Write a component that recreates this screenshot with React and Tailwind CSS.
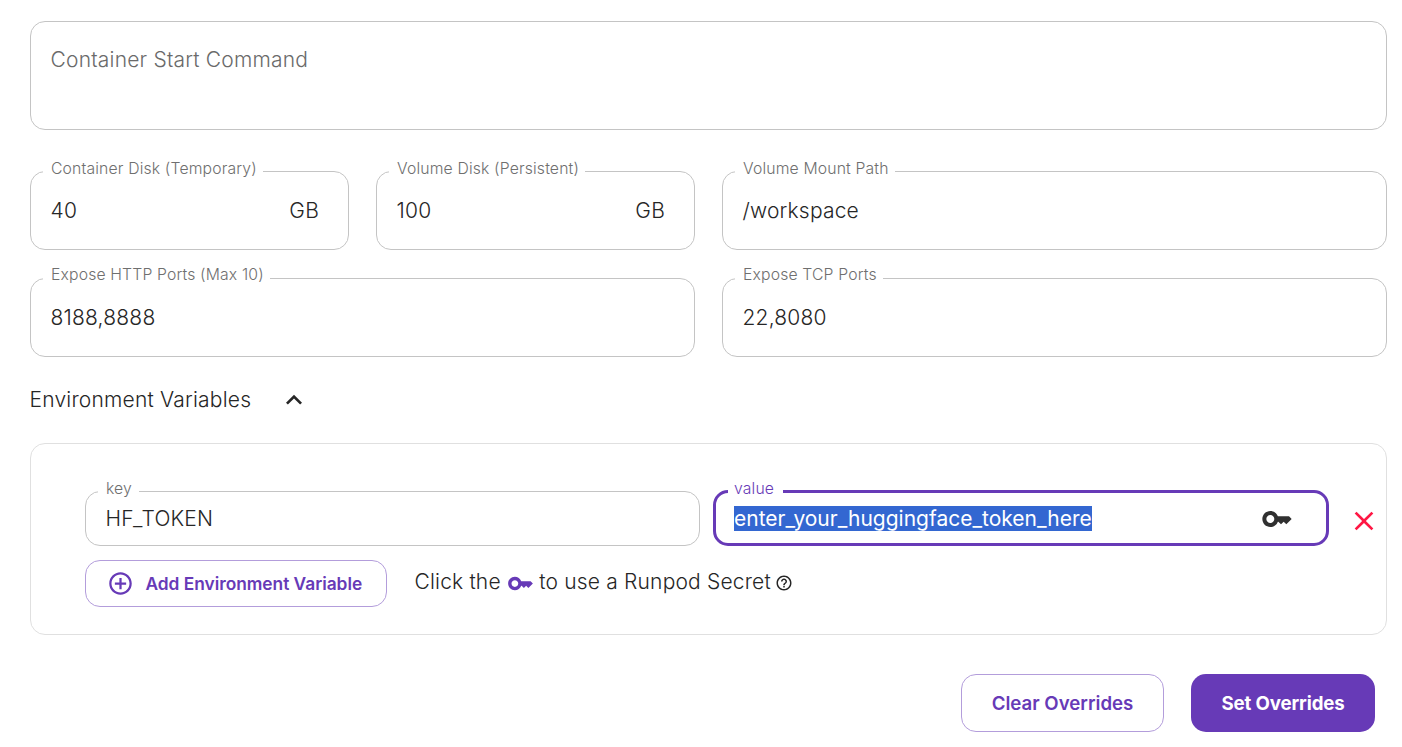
import React from "react";

const KEY =
  "M21 10h-8.35C11.83 7.67 9.61 6 7 6c-3.31 0-6 2.69-6 6s2.69 6 6 6c2.61 0 4.83-1.67 5.65-4H13l2 2 2-2 2 2 4-4.04L21 10zM7 15c-1.65 0-3-1.35-3-3s1.35-3 3-3 3 1.35 3 3-1.35 3-3 3z";
const CHEVRON_UP = "m12 8-6 6 1.41 1.41L12 10.83l4.59 4.58L18 14z";
const CLOSE =
  "M19 6.41 17.59 5 12 10.59 6.41 5 5 6.41 10.59 12 5 17.59 6.41 19 12 13.41 17.59 19 19 17.59 13.41 12z";
const ADD_CIRCLE =
  "M13 7h-2v4H7v2h4v4h2v-4h4v-2h-4V7zm-1-5C6.48 2 2 6.48 2 12s4.48 10 10 10 10-4.48 10-10S17.52 2 12 2zm0 18c-4.41 0-8-3.59-8-8s3.59-8 8-8 8 3.59 8 8-3.59 8-8 8z";
const HELP =
  "M11 18h2v-2h-2v2zm1-16C6.48 2 2 6.48 2 12s4.48 10 10 10 10-4.48 10-10S17.52 2 12 2zm0 18c-4.41 0-8-3.59-8-8s3.59-8 8-8 8 3.59 8 8-3.59 8-8 8zm0-14c-2.21 0-4 1.79-4 4h2c0-1.1.9-2 2-2s2 .9 2 2c0 2-3 1.75-3 5h2c0-2.25 3-2.5 3-5 0-2.21-1.79-4-4-4z";

function Icon({ path, className }) {
  return (
    <svg viewBox="0 0 24 24" fill="currentColor" aria-hidden="true" className={`shrink-0 ${className}`}>
      <path d={path} />
    </svg>
  );
}

function Field({
  label,
  value,
  suffix,
  className,
  legendClass = "h-[23px] pb-1.5",
  bodyClass = "h-[56px]",
}) {
  return (
    <fieldset className={`min-w-0 rounded-[15px] border border-[#c4c4c4] ${className}`}>
      <legend className={`ml-3 pr-[6px] pl-2 text-[15.75px] leading-[17px] tracking-[0.15px] text-[#6f6f6f] ${legendClass}`}>
        {label}
      </legend>
      <div className={`flex items-center justify-between pr-[29px] pl-[19.5px] ${bodyClass}`}>
        <span>{value}</span>
        {suffix && <span>{suffix}</span>}
      </div>
    </fieldset>
  );
}

export default function App() {
  return (
    <main className="flex h-[747px] w-[1402px] flex-col overflow-hidden bg-white pt-[21px] pr-[15px] pl-[30px] font-['Inter',sans-serif] text-[21px] leading-8 font-light tracking-[0.2px] text-[#262626]">
      <div className="h-[109px] shrink-0 rounded-[15px] border border-[#c4c4c4] px-[19.5px] pt-[22px] text-[#6a6a6a]">
        Container Start Command
      </div>

      <div className="mt-[30px] flex shrink-0 gap-[27px]">
        <Field label="Container Disk (Temporary)" value="40" suffix="GB" className="h-[90px] w-[319px]" />
        <Field label="Volume Disk (Persistent)" value="100" suffix="GB" className="h-[90px] w-[319px]" />
        <Field label="Volume Mount Path" value="/workspace" className="h-[90px] flex-1" />
      </div>
      <div className="mt-4 flex shrink-0 gap-[27px]">
        <Field
          label="Expose HTTP Ports (Max 10)"
          value="8188,8888"
          className="h-[91px] flex-1"
          legendClass="h-[25px] pb-2"
          bodyClass="h-[54px]"
        />
        <Field
          label="Expose TCP Ports"
          value="22,8080"
          className="h-[91px] flex-1"
          legendClass="h-[25px] pb-2"
          bodyClass="h-[54px]"
        />
      </div>

      <div className="mt-[27px] flex h-8 shrink-0 items-center gap-[27px]">
        <span className="-ml-[0.5px]">Environment Variables</span>
        <Icon path={CHEVRON_UP} className="size-8" />
      </div>

      <section className="mt-[27px] h-[192px] shrink-0 rounded-[15px] border border-[#e0e0e0] pt-9 pl-[54px]">
        <div className="flex">
          <fieldset className="h-[66px] w-[615px] min-w-0 rounded-[15px] border border-[#c4c4c4]">
            <legend className="ml-3 h-[23px] pr-[7px] pb-1.5 pl-2 text-[15.75px] leading-[17px] tracking-[0.15px] text-[#6f6f6f]">
              key
            </legend>
            <div className="flex h-[32px] items-center pl-[19.5px]">HF_TOKEN</div>
          </fieldset>
          <fieldset className="ml-[13px] h-[66px] w-[616px] min-w-0 rounded-[15px] border-3 border-[#673ab7]">
            <legend className="ml-3 h-[23px] pr-[9px] pb-1.5 pl-[6px] text-[15.75px] leading-[17px] tracking-[0.15px] text-[#673ab7]">
              value
            </legend>
            <div className="flex h-[31px] items-center justify-between pr-[33px] pl-[18px]">
              <span className="h-[25px] bg-[#3367d1] leading-[25px] font-normal tracking-normal text-white">
                enter_your_huggingface_token_here
              </span>
              <Icon path={KEY} className="size-8 text-[#303030]" />
            </div>
          </fieldset>
          <Icon path={CLOSE} className="mt-[24.5px] ml-[18.5px] size-8 text-[#ff1744]" />
        </div>

        <div className="mt-[14px] flex h-[47px] items-center">
          <button className="flex h-[47px] w-[302px] items-center rounded-[15px] border border-[#b39ddb] pl-[21px] text-[17.33px] font-semibold tracking-[-0.02px] text-[#673ab7]">
            <Icon path={ADD_CIRCLE} className="mr-[11.5px] size-[27px]" />
            Add Environment Variable
          </button>
          <p className="ml-[27.5px] flex items-center pb-1 tracking-[0.18px]">
            Click the
            <Icon path={KEY} className="mt-1 mr-[5.5px] ml-[6px] size-[27px] text-[#673ab7]" />
            to use a Runpod Secret
            <Icon path={HELP} className="mt-[3px] ml-[4.5px] size-[18px]" />
          </p>
        </div>
      </section>

      <div className="mt-[39px] flex shrink-0 justify-end gap-[27px] pr-3 text-[18.67px] font-semibold tracking-normal">
        <button className="h-[58px] w-[203px] rounded-[15px] border border-[#b39ddb] pt-0.5 text-[#673ab7]">
          Clear Overrides
        </button>
        <button className="h-[58px] w-[184px] rounded-[15px] bg-[#673ab7] pt-0.5 font-bold tracking-[-0.12px] text-white">
          Set Overrides
        </button>
      </div>
    </main>
  );
}
